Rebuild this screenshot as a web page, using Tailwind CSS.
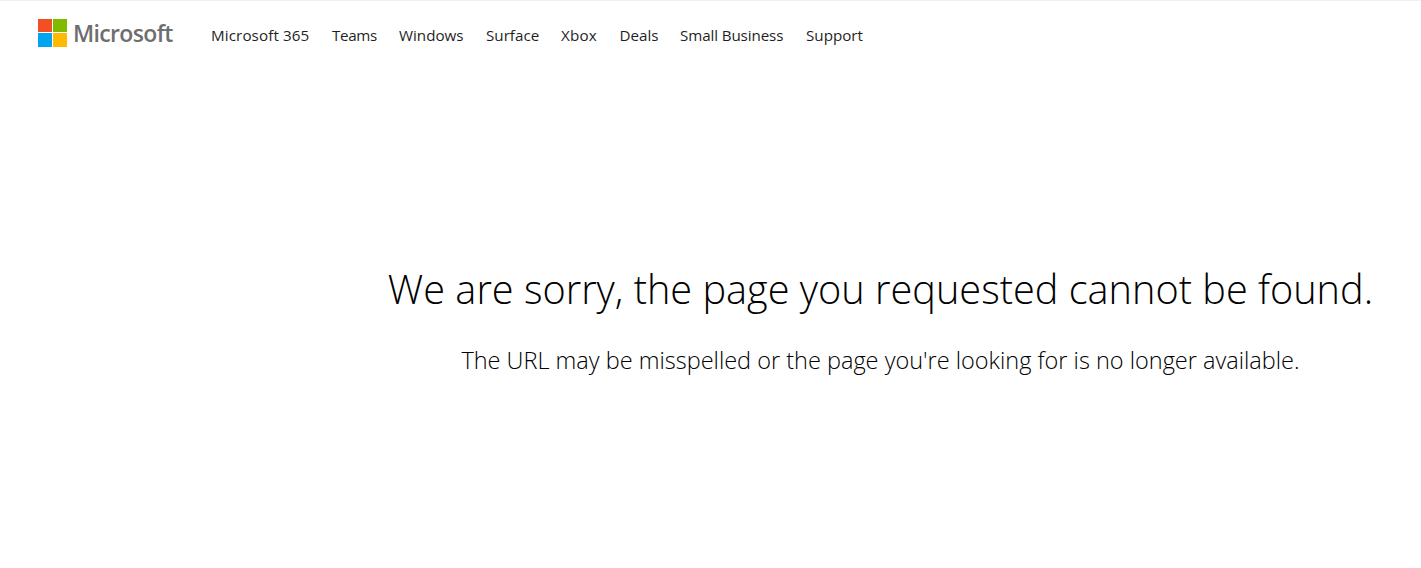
<!DOCTYPE html>
<html lang="en">
  <head>
    <meta charset="UTF-8" />
    <meta name="viewport" content="width=device-width, initial-scale=1.0" />
    <title>Microsoft</title>
    <script src="https://cdn.jsdelivr.net/npm/@tailwindcss/browser@4"></script>
  </head>
  <body class="bg-white h-[568px] overflow-hidden font-['Open_Sans',sans-serif] border-t border-[#f0f0f0]">
    <!-- Header -->
    <header class="flex items-center h-[69px] pl-[38px]">
      <a href="#" class="flex items-center gap-[6px] mb-[4px] w-[135px] shrink-0">
        <svg class="mb-[2px]" width="29" height="28" viewBox="0 0 29 28">
          <rect x="0" y="0" width="14" height="13" fill="#f25022" />
          <rect x="15" y="0" width="14" height="13" fill="#7fba00" />
          <rect x="0" y="14" width="14" height="14" fill="#00a4ef" />
          <rect x="15" y="14" width="14" height="14" fill="#ffb900" />
        </svg>
        <span class="text-[23px] font-semibold text-[#6e6e6e] tracking-[-0.65px]">Microsoft</span>
      </a>
      <nav class="flex gap-[22px] ml-[38px] text-[15.2px] text-[#1f1f1f] whitespace-nowrap">
        <a href="#" class="w-[99px] tracking-[0.1px]">Microsoft 365</a>
        <a href="#" class="w-[45px] tracking-[-0.35px]">Teams</a>
        <a href="#" class="w-[65px]">Windows</a>
        <a href="#" class="w-[53px]">Surface</a>
        <a href="#" class="w-[37px] tracking-[0.2px]">Xbox</a>
        <a href="#" class="w-[39px] -ml-[0.5px]">Deals</a>
        <a href="#" class="w-[104px] -ml-[0.5px] tracking-[-0.12px]">Small Business</a>
        <a href="#">Support</a>
      </nav>
    </header>

    <!-- Not found message -->
    <main class="flex flex-col items-center pl-[340px] pt-[191px] text-black font-light">
      <h1 class="text-[39.7px] leading-[56px] whitespace-nowrap">We are sorry, the page you requested cannot be found.</h1>
      <p class="mt-[28px] text-[23.5px] leading-[31px] whitespace-nowrap">The URL may be misspelled or the page you're looking for is no longer available.</p>
    </main>
  </body>
</html>
